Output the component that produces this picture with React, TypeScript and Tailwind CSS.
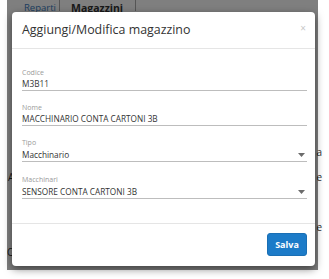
import React from "react";

function Caret() {
  return (
    <svg width="7" height="4" viewBox="0 0 7 4" className="shrink-0">
      <path d="M0 0 L7 0 L3.5 4 Z" fill="#6b6b6b" />
    </svg>
  );
}

function Field({ label, value, select }: { label: string; value: string; select?: boolean }) {
  return (
    <div className={select ? "mb-[13px]" : "mb-[12px]"}>
      <div className="text-[7px] leading-[10px] text-[#9a9a9a]">{label}</div>
      <div className={`flex items-center justify-between border-b border-[#bdbdbd] ${select ? "h-[14px]" : "h-[13px]"} pr-[2px]`}>
        <span className="text-[8.25px] leading-[12px] text-[#333]">{value}</span>
        {select && <Caret />}
      </div>
    </div>
  );
}

export default function App() {
  return (
    <div className="relative w-[329px] h-[279px] bg-white overflow-hidden" style={{ fontFamily: "'Open Sans', sans-serif" }}>
      {/* page beneath */}
      <div className="absolute left-[7px] top-0 w-[311px] h-[270px] bg-white">
        <div className="flex items-end h-[11px] pl-[17px]">
          <span className="text-[9.5px] leading-[12px] text-[#3a7bbf] -mb-[3px] w-[35px]">Reparti</span>
          <span className="w-px h-[11px] bg-[#aaa]" />
          <span className="text-[10.5px] leading-[12px] font-bold text-[#333] -mb-[3px] pl-[11px] w-[75px]">Magazzini</span>
          <span className="w-px h-[11px] bg-[#aaa]" />
        </div>
        <div className="absolute left-[1px] top-[170px] text-[10px] text-[#333]">A</div>
        <div className="absolute left-[0px] top-[245px] text-[10px] text-[#333]">C</div>
        <div className="absolute right-[-4px] top-[145px] text-[10px] text-[#333]">a</div>
        <div className="absolute right-[-4px] top-[170px] text-[10px] text-[#333]">e</div>
        <div className="absolute right-[-4px] top-[220px] text-[10px] text-[#333]">e</div>
      </div>
      {/* backdrop */}
      <div className="absolute left-[7px] top-0 w-[311px] h-[270px] bg-black/50" />
      {/* modal */}
      <div className="absolute left-[12px] top-[12px] w-[303px] h-[254px] bg-white rounded-[4px] shadow-[0_3px_9px_rgba(0,0,0,0.5)] flex flex-col">
        <div className="h-[37px] border-b border-[#e5e5e5] flex items-center justify-between pl-[10px] pr-[9px]">
          <span className="text-[12.4px] leading-[18px] text-[#333]">Aggiungi/Modifica magazzino</span>
          <span className="text-[10px] leading-[10px] text-[#c8c8c8] -mt-[5px]">×</span>
        </div>
        <div className="pt-[19px] pl-[10px] pr-[8px] flex-1">
          <Field label="Codice" value="M3B11" />
          <Field label="Nome" value="MACCHINARIO CONTA CARTONI 3B" />
          <Field label="Tipo" value="Macchinario" select />
          <Field label="Macchinari" value="SENSORE CONTA CARTONI 3B" select />
        </div>
        <div className="border-t border-[#e5e5e5] h-[43px] flex items-start justify-end pt-[9px] pr-[8px]">
          <button className="h-[23px] w-[40px] rounded-[3px] bg-[#1c7bc8] border border-[#1a6fb4] text-white text-[9px] font-bold leading-none">Salva</button>
        </div>
      </div>
    </div>
  );
}
